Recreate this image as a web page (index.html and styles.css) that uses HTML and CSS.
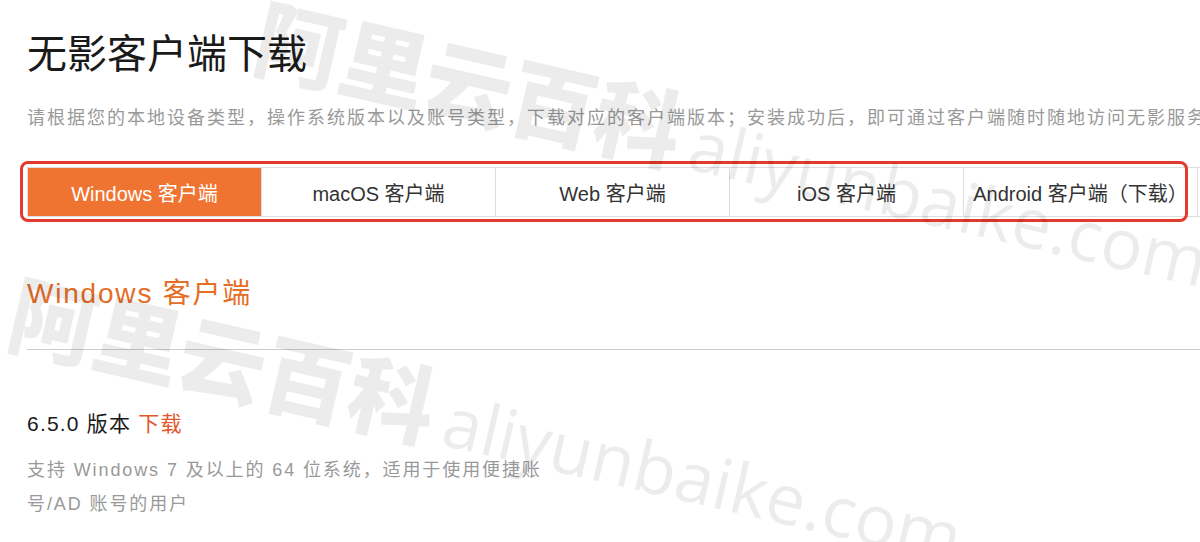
FILE: index.html
```html
<!DOCTYPE html>
<html lang="zh-CN">
<head>
    <meta charset="UTF-8">
    <meta name="viewport" content="width=device-width, initial-scale=1.0">
    <title>无影客户端下载</title>
    <link rel="stylesheet" href="styles.css">
</head>
<body>
    <div class="page">
        <h1>无影客户端下载</h1>
        <p class="intro">请根据您的本地设备类型，操作系统版本以及账号类型，下载对应的客户端版本；安装成功后，即可通过客户端随时随地访问无影服务。</p>

        <div class="tabs-wrap">
            <div class="tabs">
                <a class="tab active">Windows 客户端</a>
                <a class="tab">macOS 客户端</a>
                <a class="tab">Web 客户端</a>
                <a class="tab">iOS 客户端</a>
                <a class="tab">Android 客户端（下载）</a>
                <a class="tab">Linux 客户端</a>
            </div>
            <div class="highlight"></div>
        </div>

        <h2 class="section-title">Windows 客户端</h2>
        <hr class="divider">

        <div class="version">
            <p class="version-name">6.5.0 版本 <a class="download">下载</a></p>
            <p class="version-desc">支持 Windows 7 及以上的 64 位系统，适用于使用便捷账号/AD 账号的用户</p>
        </div>
    </div>

    <!-- 水印 -->
    <div class="wm wm-1"><span class="wm-cn">阿里云百科</span><span class="wm-en">aliyunbaike.com</span></div>
    <div class="wm wm-2"><span class="wm-cn">阿里云百科</span><span class="wm-en">aliyunbaike.com</span></div>
</body>
</html>
```

FILE: styles.css
```css
html, body {
    margin: 0;
    padding: 0;
    overflow: hidden;
}
body {
    font-family: "Liberation Sans", "Noto Sans CJK SC", sans-serif;
    background: #fff;
    color: #222;
    position: relative;
    height: 542px;
}
.page {
    padding: 34px 0 0 27px;
}
h1 {
    margin: 0;
    font-size: 40px;
    line-height: 40px;
    font-weight: 400;
    color: #1a1a1a;
}
.intro {
    margin: 32px 0 0;
    font-size: 18px;
    line-height: 24px;
    letter-spacing: 2px;
    color: #999;
    white-space: nowrap;
}
.tabs-wrap {
    position: relative;
    margin-top: 37px;
}
.tabs {
    display: flex;
    width: max-content;
    border-top: 1px solid #ddd;
    border-bottom: 1px solid #ddd;
}
.tab {
    width: 233px;
    height: 48px;
    display: flex;
    align-items: center;
    justify-content: center;
    border-right: 1px solid #ddd;
    font-size: 20px;
    color: #333;
    white-space: nowrap;
    cursor: pointer;
}
.tab:first-child {
    border-left: 1px solid #ddd;
}
.tab.active {
    background-color: #ef7431;
    color: #fff;
}
.highlight {
    position: absolute;
    left: -7px;
    top: -6px;
    width: 1162px;
    height: 55px;
    border: 3px solid #e23a2b;
    border-radius: 8px;
    pointer-events: none;
}
.section-title {
    margin: 59px 0 0;
    font-size: 28px;
    line-height: 36px;
    font-weight: 400;
    letter-spacing: 1.8px;
    color: #e56d26;
}
.divider {
    margin: 37px 0 0;
    border: none;
    border-top: 1px solid #ccc;
}
.version {
    margin-top: 60px;
}
.version-name {
    margin: 0;
    font-size: 21px;
    line-height: 28px;
    letter-spacing: 1.2px;
    color: #1a1a1a;
}
.download {
    color: #e4572e;
    cursor: pointer;
}
.version-desc {
    margin: 15px 0 0;
    max-width: 540px;
    font-size: 18px;
    line-height: 34px;
    letter-spacing: 1.9px;
    color: #999;
}

/* 水印 */
.wm {
    position: absolute;
    height: 90px;
    line-height: 90px;
    white-space: nowrap;
    transform: rotate(13deg);
    transform-origin: 0 45px;
    color: rgba(0, 0, 0, 0.075);
    pointer-events: none;
}
.wm-1 {
    left: 258px;
    top: -14px;
}
.wm-2 {
    left: 12px;
    top: 262px;
}
.wm-cn {
    font-family: "Noto Sans CJK SC", sans-serif;
    font-size: 87px;
    font-weight: 900;
}
.wm-en {
    margin-left: 12px;
    font-family: "Open Sans", sans-serif;
    font-size: 70px;
    font-weight: 400;
}
```
